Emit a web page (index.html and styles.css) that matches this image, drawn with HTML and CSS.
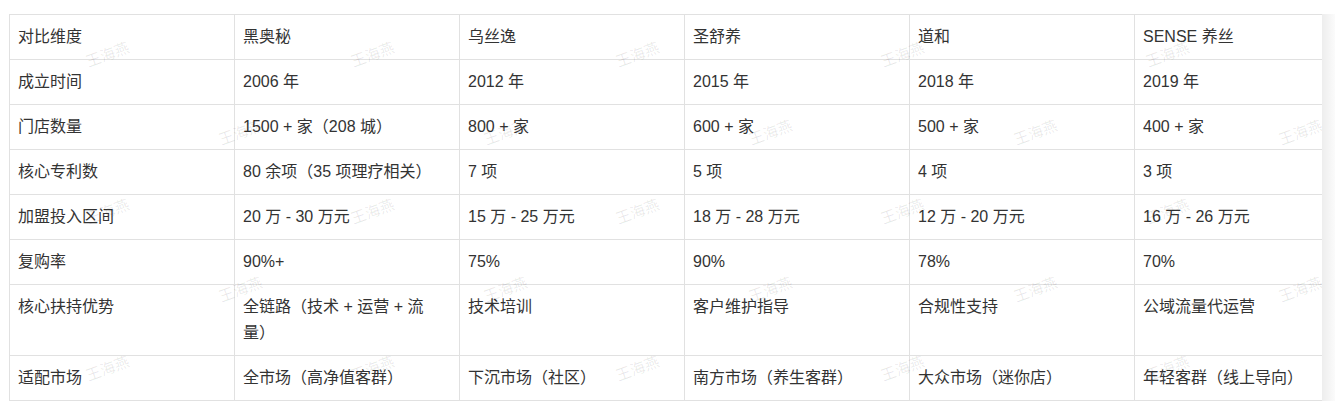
FILE: index.html
```html
<!DOCTYPE html>
<html lang="zh">
<head>
<meta charset="utf-8">
<link rel="stylesheet" href="styles.css">
</head>
<body>
<div class="frame">
  <div class="scroller">
    <table class="cmp">
      <colgroup><col><col><col><col><col><col></colgroup>
      <tbody>
        <tr><td>对比维度</td><td>黑奥秘</td><td>乌丝逸</td><td>圣舒养</td><td>道和</td><td>SENSE 养丝</td></tr>
        <tr><td>成立时间</td><td>2006 年</td><td>2012 年</td><td>2015 年</td><td>2018 年</td><td>2019 年</td></tr>
        <tr><td>门店数量</td><td>1500 + 家（208 城）</td><td>800 + 家</td><td>600 + 家</td><td>500 + 家</td><td>400 + 家</td></tr>
        <tr><td>核心专利数</td><td>80 余项（35 项理疗相关）</td><td>7 项</td><td>5 项</td><td>4 项</td><td>3 项</td></tr>
        <tr><td>加盟投入区间</td><td>20 万 - 30 万元</td><td>15 万 - 25 万元</td><td>18 万 - 28 万元</td><td>12 万 - 20 万元</td><td>16 万 - 26 万元</td></tr>
        <tr><td>复购率</td><td>90%+</td><td>75%</td><td>90%</td><td>78%</td><td>70%</td></tr>
        <tr><td>核心扶持优势</td><td>全链路（技术 + 运营 + 流量）</td><td>技术培训</td><td>客户维护指导</td><td>合规性支持</td><td>公域流量代运营</td></tr>
        <tr><td>适配市场</td><td>全市场（高净值客群）</td><td>下沉市场（社区）</td><td>南方市场（养生客群）</td><td>大众市场（迷你店）</td><td>年轻客群（线上导向）</td></tr>
      </tbody>
    </table>
    <div class="watermarks" aria-hidden="true">
      <div class="wm-row"><span>王海燕</span><span>王海燕</span><span>王海燕</span><span>王海燕</span><span>王海燕</span></div>
      <div class="wm-row shifted"><span>王海燕</span><span>王海燕</span><span>王海燕</span><span>王海燕</span><span>王海燕</span></div>
      <div class="wm-row"><span>王海燕</span><span>王海燕</span><span>王海燕</span><span>王海燕</span><span>王海燕</span></div>
      <div class="wm-row shifted"><span>王海燕</span><span>王海燕</span><span>王海燕</span><span>王海燕</span><span>王海燕</span></div>
      <div class="wm-row"><span>王海燕</span><span>王海燕</span><span>王海燕</span><span>王海燕</span><span>王海燕</span></div>
    </div>
  </div>
</div>
</body>
</html>
```

FILE: styles.css
```css
html, body {
  margin: 0;
  padding: 0;
  background: #ffffff;
}

body {
  padding: 14px 0 0 9px;
  font-family: "Liberation Sans", "Noto Sans CJK SC", sans-serif;
  color: #333333;
}

.frame {
  position: relative;
  width: 1313px;
}

.frame::after {
  content: "";
  position: absolute;
  top: 0;
  bottom: 0;
  left: 100%;
  width: 13px;
  background: linear-gradient(to right, rgba(0, 0, 0, 0.07), rgba(0, 0, 0, 0.015));
}

.scroller {
  position: relative;
  overflow: hidden;
}

.cmp {
  border-collapse: collapse;
  table-layout: fixed;
  width: 1351px;
}

.cmp col {
  width: 225px;
}

.cmp td {
  border: 1px solid #e1e1e1;
  padding: 9px 16px 9px 8px;
  font-size: 16px;
  line-height: 26px;
  vertical-align: top;
  text-align: left;
}

.watermarks {
  position: absolute;
  left: 32px;
  top: 0;
  pointer-events: none;
  display: flex;
  flex-direction: column;
}

.wm-row {
  display: flex;
  gap: 132.5px;
  height: 78.5px;
  align-items: center;
}

.wm-row.shifted {
  padding-left: 132.5px;
}

.wm-row span {
  width: 132.5px;
  flex: none;
  text-align: center;
  font-family: "Noto Sans CJK SC", sans-serif;
  font-size: 15px;
  color: rgba(0, 0, 0, 0.09);
  transform: rotate(-20deg);
  white-space: nowrap;
}
```
